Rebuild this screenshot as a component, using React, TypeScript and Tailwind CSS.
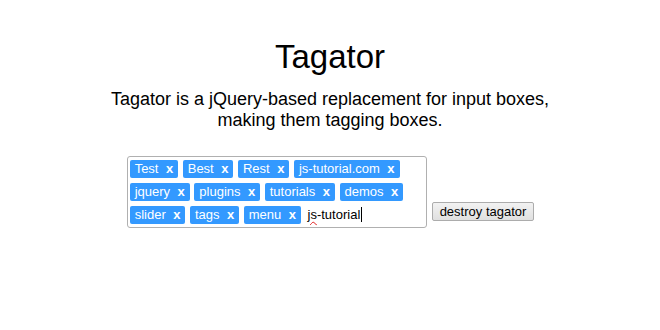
import { useState } from 'react';

const initialTags = [
  'Test',
  'Best',
  'Rest',
  'js-tutorial.com',
  'jquery',
  'plugins',
  'tutorials',
  'demos',
  'slider',
  'tags',
  'menu',
];

function Tag({ label, onRemove }: { label: string; onRemove: () => void }) {
  return (
    <div className="flex h-[18px] items-center rounded-[2px] bg-[#3399ff] pl-[5px] pr-[5px] text-[13px] leading-[18px] text-white">
      <span>{label}</span>
      <button
        type="button"
        onClick={onRemove}
        className="ml-[7.5px] cursor-pointer font-bold leading-[18px] text-white"
      >
        x
      </button>
    </div>
  );
}

export default function App() {
  const [tags, setTags] = useState(initialTags);

  return (
    <div className="min-h-[330px] bg-white text-center text-black [font-family:'Liberation_Sans',Arial,sans-serif]">
      <h1 className="pt-[38px] text-[33px] leading-[38px] font-normal">Tagator</h1>
      <p className="mt-[13px] text-[18px] leading-[21px]">
        Tagator is a jQuery-based replacement for input boxes,
        <br />
        making them tagging boxes.
      </p>

      {/* Tag box + button */}
      <div className="mt-[25px] flex items-end justify-center gap-[5px] pl-[1px]">
        <div className="flex w-[300px] flex-wrap content-start gap-x-[4.5px] gap-y-[5px] rounded-[3px] border border-[#b0b0b0] pt-[2.5px] pr-[2px] pb-[3px] pl-[2px] text-left">
          {tags.map((tag) => (
            <Tag key={tag} label={tag} onRemove={() => setTags(tags.filter((t) => t !== tag))} />
          ))}
          <div className="flex h-[18px] items-center pl-[2px] text-[13px] leading-[18px] text-black">
            <span className="underline decoration-[#e02020] decoration-wavy decoration-1 underline-offset-[2px]">js</span>
            <span>-tutorial</span>
            <span className="ml-px inline-block h-[15px] w-px bg-black" />
          </div>
        </div>
        <button
          type="button"
          className="mb-[6.5px] h-[19px] rounded-[2px] border border-[#acacac] bg-gradient-to-b from-[#f2f2f2] to-[#e0e0e0] px-[7px] text-[13px] leading-[17px] text-black"
        >
          destroy tagator
        </button>
      </div>
    </div>
  );
}
